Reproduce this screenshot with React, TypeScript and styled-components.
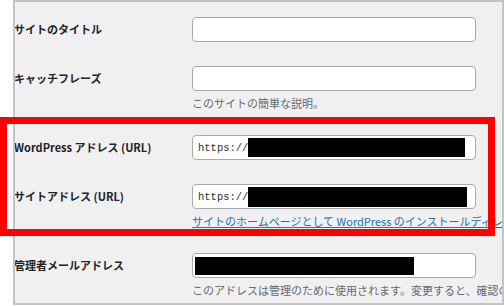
import React from "react";
import styled, { createGlobalStyle } from "styled-components";

const Global = createGlobalStyle`
  html, body { margin: 0; padding: 0; background: #ffffff; }
  body { font-family: "Noto Sans CJK JP", "Noto Sans", sans-serif; }
  * { box-sizing: border-box; }
`;

const Stage = styled.div`
  position: relative;
  width: 504px;
  height: 306px;
  overflow: hidden;
  background: #ffffff;
  padding-left: 13px;
`;

const Frame = styled.div`
  width: 491px;
  height: 305px;
  border: 2px solid #c3c4c7;
  background: #f0f0f1;
  overflow: hidden;
  padding-top: 3px;
`;

const Row = styled.div`
  display: grid;
  grid-template-columns: 177px 1fr;
  padding: 12px 0;
`;

const Label = styled.div`
  margin-left: -1px;
  font-size: 11px;
  font-weight: 700;
  line-height: 25px;
  color: #1d2327;
  white-space: nowrap;
`;

const Cell = styled.div`
  display: flex;
  flex-direction: column;
  min-width: 0;
`;

const Field = styled.div<{ $pad?: number }>`
  width: 284px;
  height: 25px;
  background: #ffffff;
  border: 1px solid #a7aaad;
  border-radius: 4px;
  display: flex;
  align-items: center;
  padding: 0 ${(p) => p.$pad ?? 5}px;
  overflow: hidden;
`;

const Mono = styled.span`
  font-family: "Liberation Mono", "DejaVu Sans Mono", monospace;
  font-size: 10.5px;
  color: #2c3338;
  white-space: nowrap;
`;

const Redacted = styled.span<{ $w: number; $h: number }>`
  display: inline-block;
  flex: none;
  width: ${(p) => p.$w}px;
  height: ${(p) => p.$h}px;
  background: #000000;
`;

const Description = styled.p`
  margin: 4px 0 0;
  font-size: 11px;
  line-height: 16px;
  color: #646970;
  white-space: nowrap;
`;

const HelpLink = styled.a`
  margin-top: 4px;
  font-size: 11px;
  line-height: 16px;
  color: #2271b1;
  text-decoration: underline;
  white-space: nowrap;
`;

const Highlight = styled.div`
  position: absolute;
  left: 0;
  top: 117px;
  width: 495px;
  height: 119px;
  border: 7px solid #ff0000;
  pointer-events: none;
`;

export default function App() {
  return (
    <>
      <Global />
      <Stage>
        <Frame>
          <Row>
            <Label>サイトのタイトル</Label>
            <Cell>
              <Field />
            </Cell>
          </Row>
          <Row>
            <Label>キャッチフレーズ</Label>
            <Cell>
              <Field />
              <Description>このサイトの簡単な説明。</Description>
            </Cell>
          </Row>
          <Row>
            <Label>WordPress アドレス (URL)</Label>
            <Cell>
              <Field>
                <Mono>https://</Mono>
                <Redacted $w={217} $h={19} />
              </Field>
            </Cell>
          </Row>
          <Row>
            <Label>サイトアドレス (URL)</Label>
            <Cell>
              <Field>
                <Mono>https://</Mono>
                <Redacted $w={219} $h={20} />
              </Field>
              <HelpLink href="#">
                サイトのホームページとして WordPress のインストールディレクトリとは異なる場所を設定する場合は、ここにアドレスを入力してください。
              </HelpLink>
            </Cell>
          </Row>
          <Row>
            <Label>管理者メールアドレス</Label>
            <Cell>
              <Field $pad={2}>
                <Redacted $w={219} $h={18} />
              </Field>
              <Description>
                このアドレスは管理のために使用されます。変更すると、確認のため新しいアドレスにメールを送信します。
              </Description>
            </Cell>
          </Row>
        </Frame>
        <Highlight />
      </Stage>
    </>
  );
}
